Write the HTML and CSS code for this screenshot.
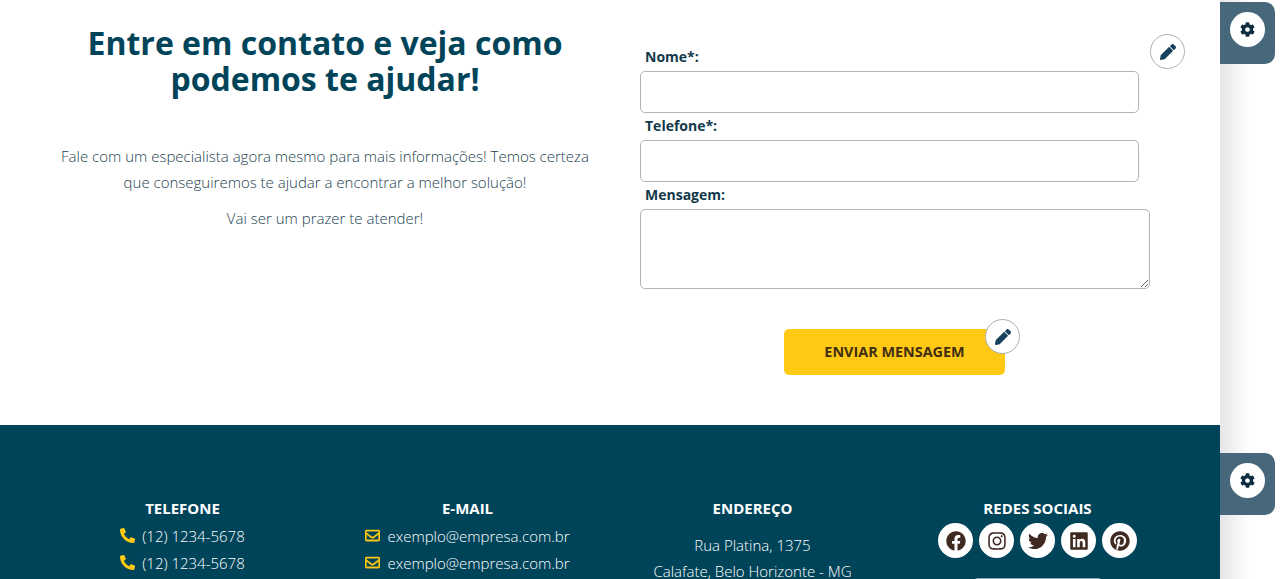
FILE: index.html
```html
<!DOCTYPE html>
<html lang="pt-BR">
<head>
  <meta charset="UTF-8" />
  <meta name="viewport" content="width=device-width, initial-scale=1" />
  <title>Contato</title>
  <link rel="stylesheet" href="styles.css">
</head>
<body>

<svg class="sprites" aria-hidden="true">
  <symbol id="i-gear" viewBox="0 0 512 512"><path d="M487.4 315.7l-42.6-24.6c4.3-23.2 4.3-47 0-70.2l42.6-24.6c4.9-2.8 7.1-8.6 5.5-14-11.1-35.6-30-67.8-54.7-94.6-3.8-4.1-10-5.1-14.8-2.3L380.8 110c-17.9-15.4-38.5-27.3-60.8-35.1V25.8c0-5.6-3.9-10.5-9.4-11.7-36.7-8.2-74.3-7.8-109.2 0-5.5 1.2-9.4 6.1-9.4 11.7V75c-22.2 7.9-42.8 19.8-60.8 35.1L88.7 85.5c-4.9-2.8-11-1.9-14.8 2.3-24.7 26.7-43.6 58.9-54.7 94.6-1.7 5.4.6 11.2 5.5 14L67.3 221c-4.3 23.2-4.3 47 0 70.2l-42.6 24.6c-4.9 2.8-7.1 8.6-5.5 14 11.1 35.6 30 67.8 54.7 94.6 3.8 4.1 10 5.1 14.8 2.3l42.6-24.6c17.9 15.4 38.5 27.3 60.8 35.1v49.2c0 5.6 3.9 10.5 9.4 11.7 36.7 8.2 74.3 7.8 109.2 0 5.5-1.2 9.4-6.1 9.4-11.7v-49.2c22.2-7.9 42.8-19.8 60.8-35.1l42.6 24.6c4.9 2.8 11 1.9 14.8-2.3 24.7-26.7 43.6-58.9 54.7-94.6 1.5-5.5-.7-11.3-5.6-14.1zM256 336c-44.1 0-80-35.9-80-80s35.9-80 80-80 80 35.9 80 80-35.9 80-80 80z"/></symbol>
  <symbol id="i-pencil" viewBox="0 0 512 512"><path d="M497.9 142.1l-46.1 46.1c-4.7 4.7-12.3 4.7-17 0l-111-111c-4.7-4.7-4.7-12.3 0-17l46.1-46.1c18.7-18.7 49.1-18.7 67.9 0l60.1 60.1c18.8 18.7 18.8 49.1 0 67.9zM284.2 99.8L21.6 362.4.4 483.9c-2.9 16.4 11.4 30.6 27.8 27.8l121.5-21.3 262.6-262.6c4.7-4.7 4.7-12.3 0-17l-111-111c-4.8-4.7-12.4-4.7-17.1 0z"/></symbol>
  <symbol id="i-phone" viewBox="0 0 512 512"><path d="M497.39 361.8l-112-48a24 24 0 0 0-28 6.9l-49.6 60.6A370.66 370.66 0 0 1 130.6 204.11l60.6-49.6a23.94 23.94 0 0 0 6.9-28l-48-112A24.16 24.16 0 0 0 122.6.61l-104 24A24 24 0 0 0 0 48c0 256.5 207.9 464 464 464a24 24 0 0 0 23.4-18.6l24-104a24.29 24.29 0 0 0-14.01-27.6z"/></symbol>
  <symbol id="i-mail" viewBox="0 0 512 512"><path d="M464 64H48C21.49 64 0 85.49 0 112v288c0 26.51 21.49 48 48 48h416c26.51 0 48-21.49 48-48V112c0-26.51-21.49-48-48-48zm0 48v40.805c-22.422 18.259-58.168 46.651-134.587 106.49-16.841 13.247-50.201 45.072-73.413 44.701-23.208.375-56.579-31.459-73.413-44.701C106.18 199.465 70.425 171.067 48 152.805V112h416zM48 400V214.398c22.914 18.251 55.409 43.862 104.938 82.646 21.857 17.205 60.134 55.186 103.062 54.955 42.717.231 80.509-37.199 103.053-54.947 49.528-38.783 82.032-64.401 104.947-82.653V400H48z"/></symbol>
</svg>

<div class="page">
  <main class="main">
    <section class="contact">
      <div class="intro">
        <h1>Entre em contato e veja como podemos te ajudar!</h1>
        <p class="lead">Fale com um especialista agora mesmo para mais informações! Temos certeza que conseguiremos te ajudar a encontrar a melhor solução!</p>
        <p class="lead">Vai ser um prazer te atender!</p>
      </div>

      <form class="form">
        <a class="edit edit-form"><svg><use href="#i-pencil"/></svg></a>
        <label for="nome">Nome*:</label>
        <input id="nome" type="text">
        <label for="fone">Telefone*:</label>
        <input id="fone" type="text">
        <label for="msg">Mensagem:</label>
        <textarea id="msg"></textarea>
        <div class="send">
          <button type="button">ENVIAR MENSAGEM</button>
          <a class="edit edit-send"><svg><use href="#i-pencil"/></svg></a>
        </div>
      </form>
    </section>

    <footer class="footer">
      <div class="col">
        <h4>TELEFONE</h4>
        <div class="line"><svg><use href="#i-phone"/></svg>(12) 1234-5678</div>
        <div class="line"><svg><use href="#i-phone"/></svg>(12) 1234-5678</div>
      </div>
      <div class="col">
        <h4>E-MAIL</h4>
        <div class="line"><svg class="ico-mail"><use href="#i-mail"/></svg>exemplo@empresa.com.br</div>
        <div class="line"><svg class="ico-mail"><use href="#i-mail"/></svg>exemplo@empresa.com.br</div>
      </div>
      <div class="col">
        <h4>ENDEREÇO</h4>
        <p class="address">Rua Platina, 1375<br>Calafate, Belo Horizonte - MG</p>
      </div>
      <div class="col">
        <h4>REDES SOCIAIS</h4>
        <div class="socials">
          <a class="social"><svg viewBox="0 0 512 512"><path d="M504 256C504 119 393 8 256 8S8 119 8 256c0 123.78 90.69 226.38 209.25 245V327.69h-63V256h63v-54.64c0-62.15 37-96.48 93.67-96.48 27.14 0 55.52 4.84 55.52 4.84v61h-31.28c-30.8 0-40.41 19.12-40.41 38.73V256h68.78l-11 71.69h-57.78V501C413.31 482.38 504 379.78 504 256z"/></svg></a>
          <a class="social"><svg viewBox="0 0 448 512"><path d="M224.1 141c-63.6 0-114.9 51.3-114.9 114.9s51.3 114.9 114.9 114.9S339 319.5 339 255.9 287.7 141 224.1 141zm0 189.6c-41.1 0-74.7-33.5-74.7-74.7s33.5-74.7 74.7-74.7 74.7 33.5 74.7 74.7-33.6 74.7-74.7 74.7zm146.4-194.3c0 14.9-12 26.8-26.8 26.8-14.9 0-26.8-12-26.8-26.8s12-26.8 26.8-26.8 26.8 12 26.8 26.8zm76.1 27.2c-1.7-35.9-9.9-67.7-36.2-93.9-26.2-26.2-58-34.4-93.9-36.2-37-2.1-147.9-2.1-184.9 0-35.8 1.7-67.6 9.9-93.9 36.1s-34.4 58-36.2 93.9c-2.1 37-2.1 147.9 0 184.9 1.7 35.9 9.9 67.7 36.2 93.9s58 34.4 93.9 36.2c37 2.1 147.9 2.1 184.9 0 35.9-1.7 67.7-9.9 93.9-36.2 26.2-26.2 34.4-58 36.2-93.9 2.1-37 2.1-147.8 0-184.8zM398.8 388c-7.8 19.6-22.9 34.7-42.6 42.6-29.5 11.7-99.5 9-132.1 9s-102.7 2.6-132.1-9c-19.6-7.8-34.7-22.9-42.6-42.6-11.7-29.5-9-99.5-9-132.1s-2.6-102.7 9-132.1c7.8-19.6 22.9-34.7 42.6-42.6 29.5-11.7 99.5-9 132.1-9s102.7-2.6 132.1 9c19.6 7.8 34.7 22.9 42.6 42.6 11.7 29.5 9 99.5 9 132.1s2.7 102.7-9 132.1z"/></svg></a>
          <a class="social"><svg viewBox="0 0 512 512"><path d="M459.37 151.716c.325 4.548.325 9.097.325 13.645 0 138.72-105.583 298.558-298.558 298.558-59.452 0-114.68-17.219-161.137-47.106 8.447.974 16.568 1.299 25.34 1.299 49.055 0 94.213-16.568 130.274-44.832-46.132-.975-84.792-31.188-98.112-72.772 6.498.974 12.995 1.624 19.818 1.624 9.421 0 18.843-1.3 27.614-3.573-48.081-9.747-84.143-51.98-84.143-102.985v-1.299c13.969 7.797 30.214 12.67 47.431 13.319-28.264-18.843-46.781-51.005-46.781-87.391 0-19.492 5.197-37.36 14.294-52.954 51.655 63.675 129.3 105.258 216.365 109.807-1.624-7.797-2.599-15.918-2.599-24.04 0-57.828 46.782-104.934 104.934-104.934 30.213 0 57.502 12.67 76.67 33.137 23.715-4.548 46.456-13.32 66.599-25.34-7.798 24.366-24.366 44.833-46.132 57.827 21.117-2.273 41.584-8.122 60.426-16.243-14.292 20.791-32.161 39.308-52.628 54.253z"/></svg></a>
          <a class="social"><svg viewBox="0 0 448 512"><path d="M416 32H31.9C14.3 32 0 46.5 0 64.3v383.4C0 465.5 14.3 480 31.9 480H416c17.6 0 32-14.5 32-32.3V64.3c0-17.8-14.4-32.3-32-32.3zM135.4 416H69V202.2h66.5V416zm-33.2-243c-21.3 0-38.5-17.3-38.5-38.5S80.9 96 102.2 96c21.2 0 38.5 17.3 38.5 38.5 0 21.3-17.2 38.5-38.5 38.5zm282.1 243h-66.4V312c0-24.8-.5-56.7-34.5-56.7-34.6 0-39.9 27-39.9 54.9V416h-66.4V202.2h63.7v29.2h.9c8.9-16.8 30.6-34.5 62.9-34.5 67.2 0 79.7 44.3 79.7 101.9V416z"/></svg></a>
          <a class="social"><svg viewBox="0 0 496 512"><path d="M496 256c0 137-111 248-248 248-25.6 0-50.2-3.9-73.4-11.1 10.1-16.5 25.2-43.5 30.8-65 3-11.6 15.4-59 15.4-59 8.1 15.4 31.7 28.5 56.8 28.5 74.8 0 128.7-68.8 128.7-154.3 0-81.9-66.9-143.2-152.9-143.2-107 0-163.9 71.8-163.9 150.1 0 36.4 19.4 81.7 50.3 96.1 4.7 2.2 7.2 1.2 8.3-3.3.8-3.4 5-20.3 6.9-28.1.6-2.5.3-4.7-1.7-7.1-10.1-12.5-18.3-35.3-18.3-56.6 0-54.7 41.4-107.6 112-107.6 60.9 0 103.6 41.5 103.6 100.9 0 67.1-33.9 113.6-78 113.6-24.3 0-42.6-20.1-36.7-44.8 7-29.5 20.5-61.3 20.5-82.6 0-19-10.2-34.9-31.4-34.9-24.9 0-44.9 25.7-44.9 60.2 0 22 7.4 36.8 7.4 36.8s-24.5 103.8-29 123.2c-5 21.4-3 51.6-.9 71.2C65.4 450.9 0 361.1 0 256 0 119 111 8 248 8s248 111 248 248z"/></svg></a>
        </div>
        <div class="more"></div>
      </div>
    </footer>
  </main>

  <aside class="rail"></aside>
</div>

<a class="tab tab-top"><span class="tab-btn"><svg><use href="#i-gear"/></svg></span></a>
<a class="tab tab-bottom"><span class="tab-btn"><svg><use href="#i-gear"/></svg></span></a>

</body>
</html>
```

FILE: styles.css
```css
html, body {
  margin: 0;
  padding: 0;
  height: 579px;
  overflow: hidden;
  background: #fff;
  font-family: "Open Sans", sans-serif;
}

.sprites {
  display: none;
}

.page {
  display: flex;
  height: 579px;
}

.main {
  width: 1220px;
  flex: none;
}

.rail {
  width: 55px;
  background: linear-gradient(to right, #e6e6e6, #fff 55%);
}

/* contato */
.contact {
  display: flex;
  height: 425px;
  box-sizing: border-box;
  padding: 25px 0 0 60px;
}

.intro {
  width: 530px;
  text-align: center;
}

.intro h1 {
  margin: 0 0 46px;
  font-size: 32px;
  line-height: 36px;
  font-weight: 700;
  color: #00445a;
}

.lead {
  margin: 0 0 10px;
  font-size: 15px;
  line-height: 26px;
  font-weight: 300;
  color: #22424f;
}

.form {
  position: relative;
  width: 510px;
  margin-left: 50px;
  padding-top: 19px;
}

.form label {
  display: block;
  padding: 0 0 2px 5px;
  font-size: 14px;
  line-height: 25px;
  font-weight: 700;
  color: #12394a;
}

.form input,
.form textarea {
  display: block;
  box-sizing: border-box;
  border: 1px solid #b3b3b3;
  border-radius: 5px;
  background: #fff;
  font-family: inherit;
}

.form input {
  width: 499px;
  height: 42px;
}

.form textarea {
  width: 510px;
  height: 80px;
}

.send {
  position: relative;
  width: 221px;
  margin: 40px 0 0 144px;
}

.send button {
  display: block;
  width: 221px;
  height: 46px;
  padding: 0 0 2px;
  border: none;
  border-radius: 5px;
  background: #ffc914;
  font-family: inherit;
  font-size: 14.4px;
  font-weight: 700;
  color: #412e15;
}

.edit {
  position: absolute;
  display: flex;
  align-items: center;
  justify-content: center;
  width: 35px;
  height: 35px;
  box-sizing: border-box;
  border: 1px solid #b0b0b0;
  border-radius: 50%;
  background: #fff;
}

.edit svg {
  width: 16px;
  height: 16px;
  fill: #17415c;
}

.edit-form {
  top: 9px;
  left: 510px;
}

.edit-send {
  top: -10px;
  right: -15px;
}

/* rodape */
.footer {
  display: grid;
  grid-template-columns: repeat(4, 285px);
  height: 154px;
  overflow: hidden;
  box-sizing: border-box;
  padding: 72px 0 0 40px;
  background: #00445a;
  color: #fff;
  text-align: center;
}

.col h4 {
  margin: 0 0 3px;
  font-size: 15px;
  line-height: 22px;
  font-weight: 700;
  color: #fff;
}

.line {
  display: flex;
  align-items: center;
  justify-content: center;
  height: 27px;
  font-size: 15px;
  font-weight: 300;
}

.line svg {
  width: 15px;
  height: 15px;
  margin-right: 7px;
  fill: #ffc914;
}

.line .ico-mail {
  stroke: #ffc914;
  stroke-width: 14px;
}

.address {
  margin: 13px 0 0;
  font-size: 15px;
  line-height: 26px;
  font-weight: 300;
}

.socials {
  display: flex;
  justify-content: center;
  gap: 6px;
  margin-top: 4px;
}

.social {
  display: flex;
  align-items: center;
  justify-content: center;
  width: 35px;
  height: 35px;
  border-radius: 50%;
  background: #fff;
}

.social svg {
  width: 20px;
  height: 20px;
  fill: #3f2a22;
}

.more {
  width: 130px;
  height: 30px;
  margin: 20px auto 0;
  border-radius: 5px 5px 0 0;
  background: #8fa8b2;
}

/* abas de configuracao */
.tab {
  position: absolute;
  left: 1220px;
  display: flex;
  justify-content: center;
  width: 55px;
  height: 62px;
  box-sizing: border-box;
  padding-top: 10px;
  border-radius: 0 10px 10px 0;
  background: #47687a;
}

.tab-top {
  top: 2px;
}

.tab-bottom {
  top: 453px;
}

.tab-btn {
  display: flex;
  align-items: center;
  justify-content: center;
  width: 35px;
  height: 35px;
  border-radius: 50%;
  background: #fff;
}

.tab-btn svg {
  width: 15px;
  height: 15px;
  fill: #0d2c40;
}
```
